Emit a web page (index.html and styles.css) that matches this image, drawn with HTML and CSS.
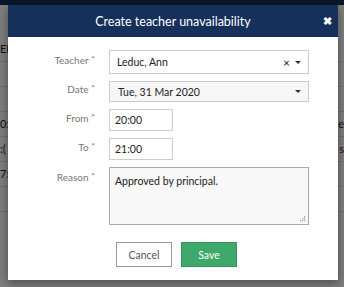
FILE: index.html
```html
<!DOCTYPE html>
<html lang="en">
<head>
  <meta charset="UTF-8">
  <title>Create teacher unavailability</title>
  <link rel="stylesheet" href="styles.css">
</head>
<body>

<div class="page">
  <div class="topbar"></div>
  <div class="table">
    <div class="row">ER</div>
    <div class="row"></div>
    <div class="row"></div>
    <div class="row"><span>0:(</span><span>e</span></div>
    <div class="row"><span>:(</span><span>s</span></div>
    <div class="row"><span>7:(</span><span></span></div>
    <div class="row"></div>
  </div>
</div>

<div class="backdrop"></div>

<div class="modal">
  <div class="modal-header">
    <h2>Create teacher unavailability</h2>
    <span class="close">&#10006;</span>
  </div>

  <div class="modal-body">
    <label class="lbl lbl-mid">Teacher<i>*</i></label>
    <div class="select select-teacher">
      <span>Leduc, Ann</span>
      <span class="tools"><b class="clear">&times;</b><b class="caret"></b></span>
    </div>

    <label class="lbl lbl-mid">Date<i>*</i></label>
    <div class="select select-date">
      <span>Tue, 31 Mar 2020</span>
      <span class="tools"><b class="caret"></b></span>
    </div>

    <label class="lbl lbl-mid">From<i>*</i></label>
    <div class="field time">20:00</div>

    <label class="lbl lbl-mid">To<i>*</i></label>
    <div class="field time">21:00</div>

    <label class="lbl lbl-top">Reason<i>*</i></label>
    <div class="field reason">
      Approved by principal.
      <svg class="grip" width="7" height="7" viewBox="0 0 7 7">
        <rect x="5" y="1" width="1.3" height="1.3" fill="#aaa"/>
        <rect x="3" y="3" width="1.3" height="1.3" fill="#aaa"/>
        <rect x="5" y="3" width="1.3" height="1.3" fill="#aaa"/>
        <rect x="1" y="5" width="1.3" height="1.3" fill="#aaa"/>
        <rect x="3" y="5" width="1.3" height="1.3" fill="#aaa"/>
        <rect x="5" y="5" width="1.3" height="1.3" fill="#aaa"/>
      </svg>
    </div>
  </div>

  <div class="modal-footer">
    <button class="btn btn-cancel">Cancel</button>
    <button class="btn btn-save">Save</button>
  </div>
</div>

</body>
</html>
```

FILE: styles.css
```css
html, body {
  margin: 0;
  height: 100%;
  overflow: hidden;
}

body {
  font-family: Lato, 'Open Sans', sans-serif;
  background-color: #fafafa;
  color: #333;
}

.topbar {
  height: 5px;
  background-color: #142c52;
}

.table {
  padding-top: 32px;
}

.row {
  height: 24px;
  border-bottom: 1px solid #ddd;
  display: flex;
  justify-content: space-between;
  font-size: 11px;
  line-height: 24px;
  color: #222;
}

.backdrop {
  position: absolute;
  inset: 0;
  background-color: rgba(0, 0, 0, 0.5);
}

.modal {
  position: absolute;
  left: 8px;
  top: 5px;
  width: 330px;
  height: 275px;
  background-color: #fff;
  box-shadow: 0 3px 9px rgba(0, 0, 0, 0.4);
}

.modal-header {
  height: 32px;
  background-color: #15305b;
  color: #fff;
  display: flex;
  align-items: center;
  justify-content: center;
  position: relative;
}

.modal-header h2 {
  margin: 0;
  font-size: 12.5px;
  font-weight: normal;
}

.close {
  position: absolute;
  right: 6px;
  top: 9px;
  font-size: 11px;
  font-weight: bold;
}

.modal-body {
  display: grid;
  grid-template-columns: 87px 200px;
  column-gap: 14px;
  row-gap: 7px;
  padding-top: 13px;
}

.lbl {
  text-align: right;
  font-size: 10px;
  color: #777;
}

.lbl i {
  font-style: normal;
  color: #d9534f;
  font-size: 8px;
  vertical-align: top;
  margin-left: 3px;
}

.lbl-mid {
  align-self: center;
  margin-bottom: 5px;
}

.lbl-top {
  padding-top: 4px;
}

.select, .field {
  box-sizing: border-box;
  border: 1px solid #ccc;
  font-size: 10.5px;
  color: #222;
}

.select {
  display: flex;
  align-items: center;
  justify-content: space-between;
  padding: 0 7px;
}

.select-teacher {
  height: 24px;
  background-color: #fff;
}

.select-date {
  height: 21px;
  padding-left: 8px;
  background-color: #f7f7f7;
}

.tools {
  display: flex;
  align-items: center;
  gap: 5px;
}

.clear {
  font-weight: normal;
  font-size: 12px;
}

.caret {
  width: 0;
  height: 0;
  border-left: 3px solid transparent;
  border-right: 3px solid transparent;
  border-top: 3px solid #333;
}

.field {
  padding: 0 5px;
}

.time {
  width: 64px;
  height: 22px;
  line-height: 20px;
}

.reason {
  height: 58px;
  padding-top: 7px;
  background-color: #f9f9f9;
  border-color: #aaa;
  position: relative;
}

.grip {
  position: absolute;
  right: 2px;
  bottom: 2px;
}

.modal-footer {
  display: flex;
  justify-content: center;
  gap: 9px;
  padding-top: 17px;
  padding-left: 7px;
}

.btn {
  width: 56px;
  height: 25px;
  font-family: Lato, sans-serif;
  font-size: 10.5px;
  border-radius: 0;
  cursor: pointer;
}

.btn-cancel {
  background-color: #fff;
  border: 1px solid #999;
  color: #555;
}

.btn-save {
  background-color: #3fa96b;
  border: 1px solid #33945b;
  color: #fff;
}
```
